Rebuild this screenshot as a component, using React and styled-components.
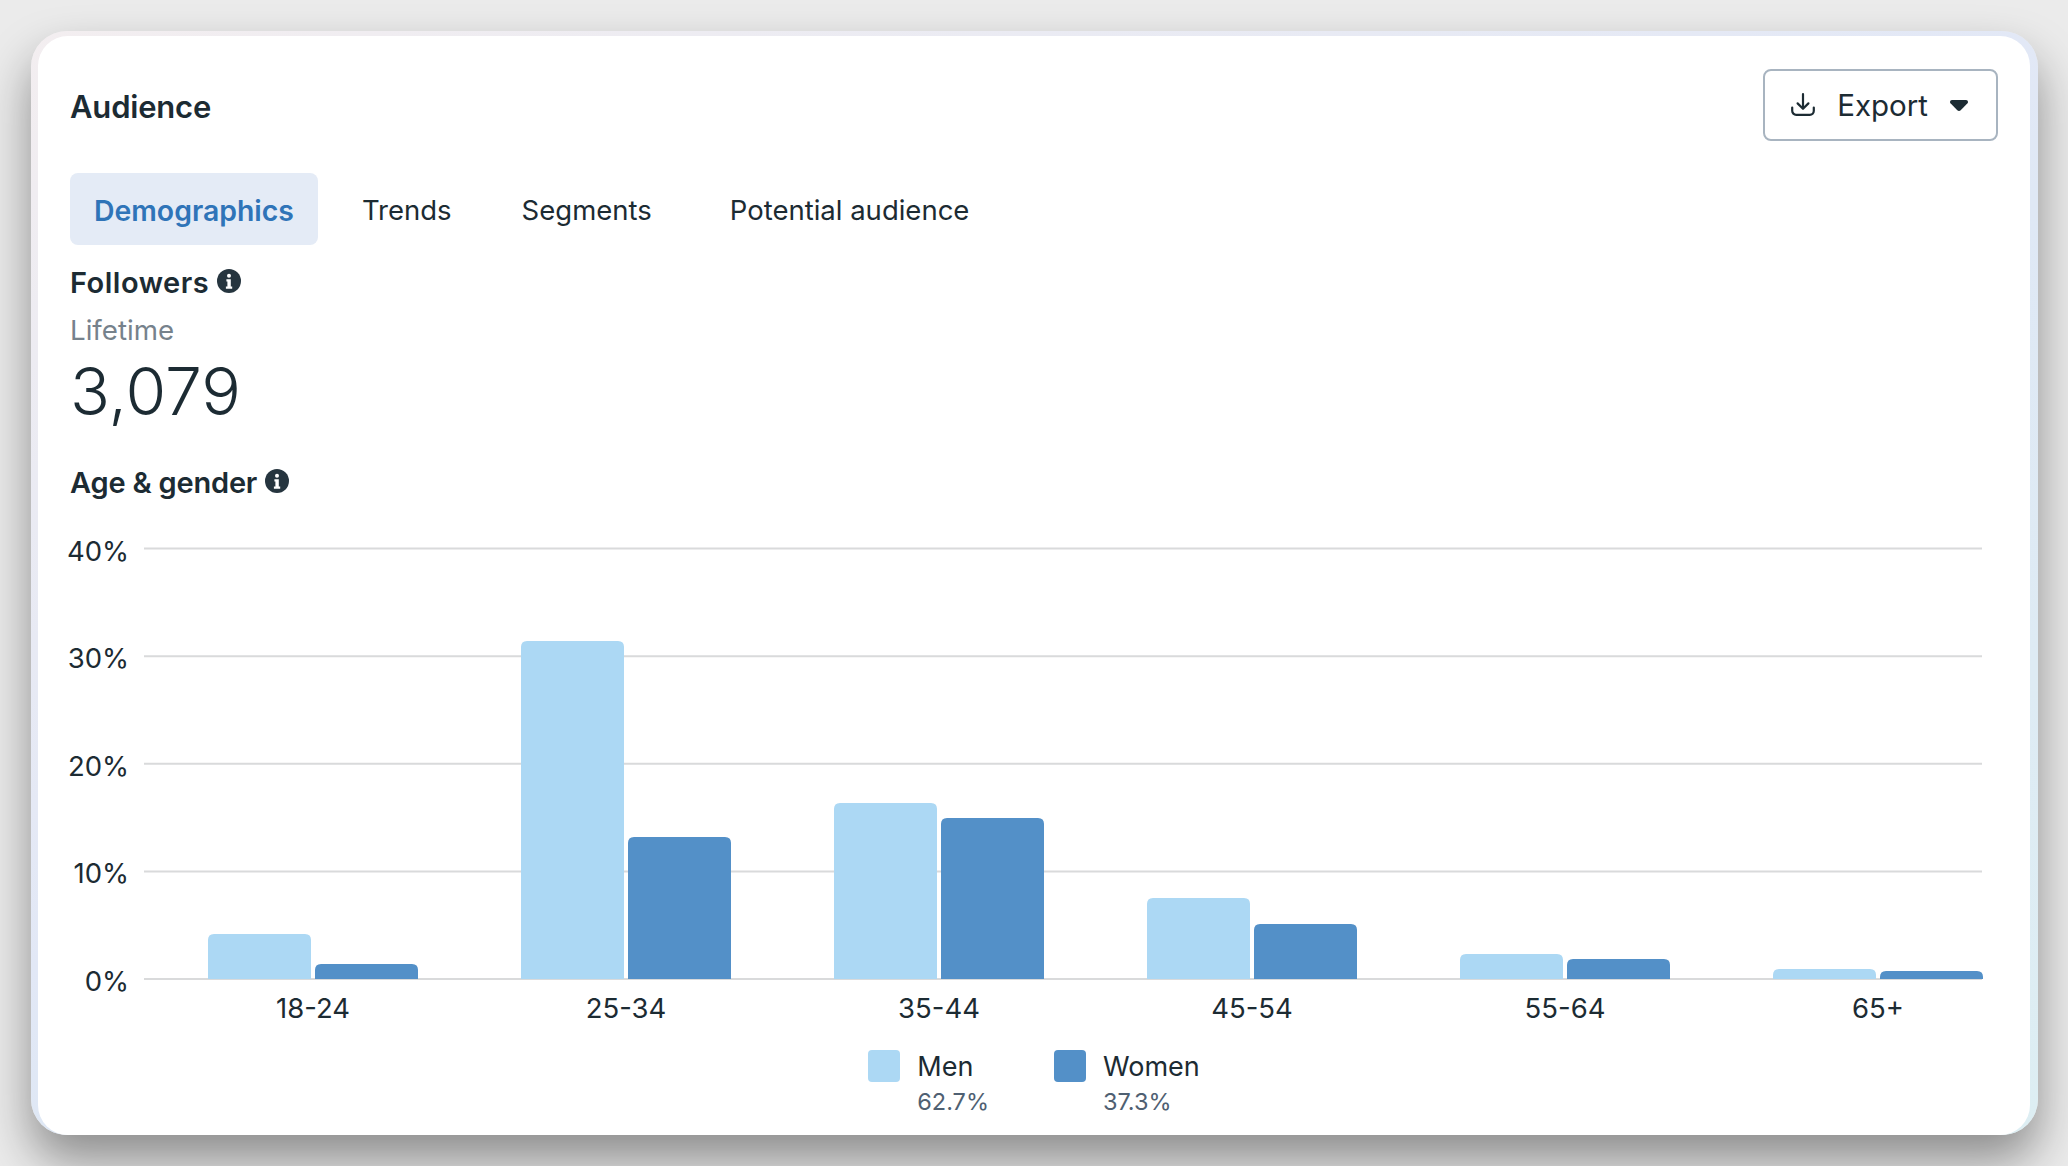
import React from 'react'
import styled, { createGlobalStyle } from 'styled-components'

const GlobalStyle = createGlobalStyle`
  html, body {
    margin: 0;
    height: 100%;
    background: #ebebeb;
  }
  * {
    box-sizing: border-box;
  }
`

const INK = '#1c2b33'
const LIGHT = '#acd8f4'
const DARK = '#5390c8'

const tabs = [
  { label: 'Demographics', active: true, inset: 0 },
  { label: 'Trends', inset: 20 },
  { label: 'Segments', inset: 22 },
  { label: 'Potential audience', inset: 30 },
]

const ageGroups = [
  { label: '18-24', men: 45, women: 15 },
  { label: '25-34', men: 338, women: 142 },
  { label: '35-44', men: 176, women: 161 },
  { label: '45-54', men: 81, women: 55 },
  { label: '55-64', men: 25, women: 20 },
  { label: '65+', men: 10, women: 8 },
]

const ticks = ['40%', '30%', '20%', '10%', '0%']

// chart geometry, in svg units
const CHART_W = 1927
const CHART_H = 510
const PLOT_LEFT = 74
const PLOT_RIGHT = 1912
const BASELINE = 459
const TICK_STEP = 107.6
const GROUP_LEFT = 138
const GROUP_STEP = 313
const BAR_W = 103

const topRoundedBar = (x, h, w) => {
  const r = Math.min(6, h)
  const y = BASELINE - h
  return `M${x} ${BASELINE}V${y + r}Q${x} ${y} ${x + r} ${y}H${x + w - r}Q${x + w} ${y} ${x + w} ${y + r}V${BASELINE}Z`
}

const InfoIcon = () => (
  <InfoSvg viewBox='0 0 24 24'>
    <circle cx='12' cy='12' r='12' fill='#26353f' />
    <circle cx='12' cy='6.8' r='2' fill='#fff' />
    <path d='M9.4 10.2h4.4v7.4h1.4v2.2H8.9v-2.2h1.5v-5.2h-1z' fill='#fff' />
  </InfoSvg>
)

const App = () => {
  return (
    <Page>
      <GlobalStyle />
      <CardFrame>
        <Card>
          <Header>
            <Title>Audience</Title>
            <ExportButton>
              <svg width='24' height='24' viewBox='0 0 24 24' fill='none' stroke={INK} strokeWidth='2.2' strokeLinecap='round' strokeLinejoin='round'>
                <path d='M12 1.2v14.2M6.6 10.4l5.4 5.4 5.4-5.4' />
                <path d='M1.2 14.5v3.3a4 4 0 0 0 4 4h13.6a4 4 0 0 0 4-4v-3.3' />
              </svg>
              <span>Export</span>
              <svg width='18' height='11' viewBox='0 0 18 11'>
                <path d='M2 0h14c1.7 0 2.6 1.9 1.5 3.2l-6.8 7c-.9.9-2.5.9-3.4 0L.5 3.2C-.6 1.9.3 0 2 0z' fill={INK} />
              </svg>
            </ExportButton>
          </Header>

          <TabBar>
            {tabs.map((tab) => (
              <Tab key={tab.label} $active={tab.active} $inset={tab.inset}>
                {tab.label}
              </Tab>
            ))}
          </TabBar>

          <SectionTitle $top={19} $tracking={0.5}>
            Followers <InfoIcon />
          </SectionTitle>
          <Muted>Lifetime</Muted>
          <BigNumber>3,079</BigNumber>

          <SectionTitle $top={38} $tracking={-0.2}>
            Age &amp; gender <InfoIcon />
          </SectionTitle>

          <Chart viewBox={`0 0 ${CHART_W} ${CHART_H}`}>
            {ticks.map((tick, i) => {
              const y = BASELINE - (ticks.length - 1 - i) * TICK_STEP
              return (
                <g key={tick}>
                  <line x1={PLOT_LEFT} x2={PLOT_RIGHT} y1={y} y2={y} stroke='#d9dadb' strokeWidth='2' />
                  <AxisLabel x='59' y={y + 12} textAnchor='end'>
                    {tick}
                  </AxisLabel>
                </g>
              )
            })}
            {ageGroups.map((group, i) => {
              const x = GROUP_LEFT + i * GROUP_STEP
              return (
                <g key={group.label}>
                  <path d={topRoundedBar(x, group.men, BAR_W)} fill={LIGHT} />
                  <path d={topRoundedBar(x + BAR_W + 4, group.women, BAR_W)} fill={DARK} />
                  <AxisLabel x={x + BAR_W + 2} y='498' textAnchor='middle'>
                    {group.label}
                  </AxisLabel>
                </g>
              )
            })}
          </Chart>

          <Legend>
            <LegendItem>
              <Swatch $color={LIGHT} />
              <div>
                <LegendName>Men</LegendName>
                <LegendShare>62.7%</LegendShare>
              </div>
            </LegendItem>
            <LegendItem>
              <Swatch $color={DARK} />
              <div>
                <LegendName>Women</LegendName>
                <LegendShare>37.3%</LegendShare>
              </div>
            </LegendItem>
          </Legend>
        </Card>
      </CardFrame>
    </Page>
  )
}

export default App

const Page = styled.div`
  width: 2068px;
  height: 1166px;
  padding: 31px 30px 0 31px;
  overflow: hidden;
  font-family: Inter, 'Liberation Sans', sans-serif;
  color: ${INK};
`

const CardFrame = styled.div`
  height: 1104px;
  padding: 5px 8px 0 7px;
  border-radius: 36px;
  background: linear-gradient(155deg, #f3eef0 0%, #e2e8f6 46%, #dfe8f5 54%, #ddeef3 100%);
  box-shadow: 0 26px 48px rgba(0, 0, 0, 0.4);
`

const Card = styled.div`
  height: 100%;
  padding: 33px 32px 0 32px;
  border-radius: 30px;
  background: #fff;
`

const Header = styled.div`
  display: flex;
  align-items: center;
  justify-content: space-between;
`

const Title = styled.h2`
  margin: 0;
  padding-top: 2px;
  font-size: 31px;
  font-weight: 600;
  letter-spacing: -0.2px;
`

const ExportButton = styled.button`
  display: flex;
  align-items: center;
  height: 72px;
  padding: 0 28px 0 26px;
  gap: 22px;
  border: 2px solid #a8b4c0;
  border-radius: 8px;
  background: #fff;
  color: ${INK};
  font-family: inherit;
  font-size: 29.5px;
`

const TabBar = styled.div`
  display: flex;
  align-items: center;
  margin-top: 32px;
`

const Tab = styled.div`
  display: flex;
  align-items: center;
  height: 72px;
  margin-left: ${(p) => p.$inset}px;
  padding: 2px 24px 0;
  border-radius: 8px;
  font-size: ${(p) => (p.$active ? '28.4px' : '27.5px')};
  background: ${(p) => (p.$active ? '#e4ebf6' : 'transparent')};
  color: ${(p) => (p.$active ? '#2f74b8' : INK)};
  font-weight: ${(p) => (p.$active ? 600 : 400)};
`

const SectionTitle = styled.div`
  display: flex;
  align-items: center;
  gap: 8px;
  height: 36px;
  margin-top: ${(p) => p.$top}px;
  font-size: 29px;
  font-weight: 600;
  letter-spacing: ${(p) => p.$tracking}px;
`

const InfoSvg = styled.svg`
  width: 24px;
  height: 24px;
  margin-top: -3px;
`

const Muted = styled.div`
  margin-top: 12px;
  font-size: 27.7px;
  line-height: 36px;
  color: #76828c;
`

const BigNumber = styled.div`
  margin-top: 8px;
  font-size: 66px;
  font-weight: 300;
  line-height: 70px;
`

const Chart = styled.svg`
  display: block;
  width: ${CHART_W}px;
  height: ${CHART_H}px;
  margin-top: 20px;
  overflow: visible;
`

const AxisLabel = styled.text`
  font-family: Inter, 'Liberation Sans', sans-serif;
  font-size: 27.5px;
  fill: ${INK};
`

const Legend = styled.div`
  display: flex;
  justify-content: center;
  gap: 65px;
  margin-top: 20px;
`

const LegendItem = styled.div`
  display: flex;
  gap: 17px;
`

const Swatch = styled.div`
  width: 32px;
  height: 32px;
  border-radius: 4px;
  background: ${(p) => p.$color};
`

const LegendName = styled.div`
  font-size: 27px;
  line-height: 34px;
`

const LegendShare = styled.div`
  margin-top: 2px;
  font-size: 23.5px;
  line-height: 32px;
  color: #4f6072;
`
